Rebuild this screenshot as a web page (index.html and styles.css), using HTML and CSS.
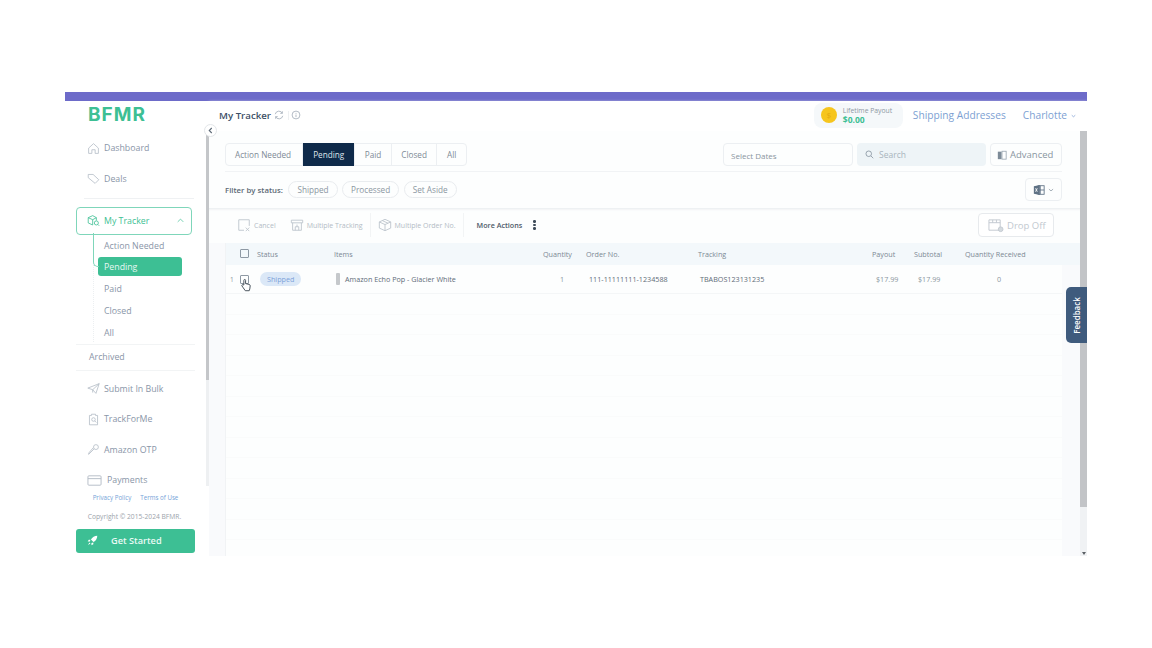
FILE: index.html
```html
<!DOCTYPE html>
<html lang="en">

<head>
    <meta charset="UTF-8">
    <title>BFMR - My Tracker</title>
    <link rel="stylesheet" href="styles.css">
</head>

<body>
    <div class="app">
        <div class="topbar"></div>
        <div class="layout">
            <aside class="sidebar">
                <div class="side-scroll">
                    <div class="logo">BFMR</div>
                    <a class="nav-item first">
                        <svg class="nav-icon" viewBox="0 0 16 16"><path d="M2 7.500 8 2l6 5.500V14H10V9.500H6V14H2z"/></svg>
                        Dashboard
                    </a>
                    <a class="nav-item">
                        <svg class="nav-icon" viewBox="0 0 16 16"><path d="M1.500 3h6l7 6.500-4.500 4.500-8.500-7z"/></svg>
                        Deals
                    </a>
                    <div class="side-line"></div>
                    <div class="tracker-box">
                        <svg class="nav-icon green" viewBox="0 0 16 16"><path d="M1.500 4.500 7 2l4.500 2.500V8M1.500 4.500V11L7 13.500M1.500 4.500 7 7v6.500M7 7l4.500-2.500"/><circle cx="11.500" cy="11" r="2.500"/><path d="m13.500 13 1.500 1.500"/></svg>
                        My Tracker
                        <svg class="chev" viewBox="0 0 10 6"><path d="M1 5l4-4 4 4"/></svg>
                    </div>
                    <div class="sub-list">
                        <a class="sub-item">Action Needed</a>
                        <a class="sub-item active">Pending</a>
                        <a class="sub-item">Paid</a>
                        <a class="sub-item">Closed</a>
                        <a class="sub-item">All</a>
                    </div>
                    <div class="archived">Archived</div>
                    <a class="nav-item">
                        <svg class="nav-icon" viewBox="0 0 16 16"><path d="M1 7.500 15 2l-4 12-4-4.500zM7 9.500 15 2M7 9.500V13"/></svg>
                        Submit In Bulk
                    </a>
                    <a class="nav-item">
                        <svg class="nav-icon" viewBox="0 0 16 16"><path d="M3 3h2.500V1.500h5V3H13v11.500H3z"/><circle cx="8" cy="8" r="2.200"/><path d="m9.500 9.700 2 2"/></svg>
                        TrackForMe
                    </a>
                    <a class="nav-item">
                        <svg class="nav-icon" viewBox="0 0 16 16"><circle cx="11" cy="5" r="3"/><path d="M8.800 7.200 2 14v-1.500l5.500-6.500"/></svg>
                        Amazon OTP
                    </a>
                    <a class="nav-item">
                        <svg class="nav-icon wide" viewBox="0 0 16 12"><rect x="1" y="1" width="14" height="10" rx="1"/><path d="M1 4h14"/></svg>
                        Payments
                    </a>
                    <div class="side-track"><div class="side-thumb"></div></div>
                </div>
                <div class="side-foot">
                    <div class="foot-links"><span>Privacy Policy</span><span>Terms of Use</span></div>
                    <div class="copyright">Copyright © 2015-2024 BFMR.</div>
                    <button class="start-btn">
                        <svg viewBox="0 0 16 16"><path d="M15 1c-4 .2-7.200 2-9.300 5.600l3.700 3.700C13 8.200 14.800 5 15 1z"/><path d="M5 6.800H2.600L1 9.500h3.200zM9.200 11v2.400L6.500 15v-3.200zM3.500 11 1.500 14.500 5 12.500z"/></svg>
                        Get Started
                    </button>
                </div>
            </aside>

            <main class="content">
                <header class="head">
                    <h1>My Tracker</h1>
                    <svg class="head-icon" viewBox="0 0 12 12"><path d="M1.500 5A4.500 4.500 0 0 1 10 4M10.500 7A4.500 4.500 0 0 1 2 8M10 1.500V4H7.500M2 10.500V8h2.500"/></svg>
                    <span class="head-sep"></span>
                    <svg class="head-icon" viewBox="0 0 12 12"><circle cx="6" cy="6" r="4.700"/><path d="M6 5.500v3M6 3.500v1"/></svg>
                    <div class="payout">
                        <span class="coin">$</span>
                        <div class="payout-text">
                            <small>Lifetime Payout</small>
                            <b>$0.00</b>
                        </div>
                    </div>
                    <a class="head-link">Shipping Addresses</a>
                    <a class="head-link user">Charlotte
                        <svg viewBox="0 0 10 6"><path d="M1.500 1.500 5 4.500l3.500-3"/></svg>
                    </a>
                </header>

                <div class="body-wrap">
                    <div class="panel">
                        <div class="tabs-row">
                            <div class="tabs">
                                <span class="tab">Action Needed</span>
                                <span class="tab on">Pending</span>
                                <span class="tab">Paid</span>
                                <span class="tab">Closed</span>
                                <span class="tab">All</span>
                            </div>
                            <div class="dates">Select Dates</div>
                            <div class="search">
                                <svg viewBox="0 0 12 12"><circle cx="5" cy="5" r="3.700"/><path d="m8 8 3 3"/></svg>
                                Search
                            </div>
                            <div class="advanced">
                                <svg viewBox="0 0 12 12"><rect x="1" y="2" width="4.500" height="9" fill="#7d8b98"/><rect x="6" y="1.500" width="5" height="9.500" fill="none" stroke="#9aa6b1"/></svg>
                                Advanced
                            </div>
                        </div>
                        <div class="filter-row">
                            <b>Filter by status:</b>
                            <span class="pill">Shipped</span>
                            <span class="pill">Processed</span>
                            <span class="pill">Set Aside</span>
                            <div class="excel">
                                <svg class="xls" viewBox="0 0 14 14"><rect x="6" y="2" width="7" height="10" fill="none" stroke="#5f7285"/><path d="M8.500 2v10M6 7h7" stroke="#5f7285"/><path d="M1 2.500 8 1.200v11.600l-7-1.300z" fill="#5f7285"/><path d="m3 5 2 4M5 5 3 9" stroke="#fff"/></svg>
                                <svg class="xls-chev" viewBox="0 0 10 6"><path d="M1.500 1.500 5 4.500l3.500-3"/></svg>
                            </div>
                        </div>
                        <div class="actions">
                            <span class="act">
                                <svg class="act-icon" viewBox="0 0 16 16"><path d="M8 14H2V2h12v7M10 11l4 4M14 11l-4 4"/></svg>
                                Cancel
                            </span>
                            <span class="act">
                                <svg class="act-icon" viewBox="0 0 16 16"><path d="M1.500 2.500h13v3h-13zM3 5.500V14h10V5.500M6 14v-4h4v4M8 10V7.500"/></svg>
                                Multiple Tracking
                            </span>
                            <span class="act-sep"></span>
                            <span class="act">
                                <svg class="act-icon" viewBox="0 0 16 16"><path d="M8 1.500 14.500 4.500v7L8 14.500 1.500 11.500v-7zM1.500 4.500 8 7.500l6.500-3M8 7.500v7M5 3l6.500 3"/></svg>
                                Multiple Order No.
                            </span>
                            <span class="act-sep"></span>
                            <span class="more">More Actions</span>
                            <span class="dots"><i></i><i></i><i></i></span>
                            <button class="drop-off">
                                <svg viewBox="0 0 18 16"><path d="M2 2h12v11H2zM2 5h12M6 2v3M10 2v3"/><circle cx="14.500" cy="12" r="2.500" fill="#d5dbe0"/></svg>
                                Drop Off
                            </button>
                        </div>
                        <div class="table">
                            <div class="t-row t-head">
                                <span class="check"></span>
                                <span>Status</span>
                                <span>Items</span>
                                <span>Quantity</span>
                                <span>Order No.</span>
                                <span>Tracking</span>
                                <span>Payout</span>
                                <span>Subtotal</span>
                                <span>Quantity Received</span>
                            </div>
                            <div class="t-row t-data">
                                <span class="row-no">1</span>
                                <span class="check"></span>
                                <span><em class="status">Shipped</em></span>
                                <span class="item"><i class="thumb"></i>Amazon Echo Pop - Glacier White</span>
                                <span class="qty">1</span>
                                <span class="dark">111-11111111-1234588</span>
                                <span class="dark">TBABOS123131235</span>
                                <span class="money">$17.99</span>
                                <span class="money">$17.99</span>
                                <span class="recv">0</span>
                            </div>
                            <div class="empty-rows"></div>
                        </div>
                    </div>
                    <div class="scrollbar">
                        <div class="scroll-thumb"></div>
                        <div class="scroll-arrow"></div>
                    </div>
                </div>
            </main>
        </div>

        <button class="collapse">
            <svg viewBox="0 0 6 8"><path d="M4.500 1 1.500 4l3 3"/></svg>
        </button>
        <div class="feedback"><span>Feedback</span></div>
        <svg class="cursor" viewBox="0 0 14 18"><path d="M4 9V2.500a1.200 1.200 0 0 1 2.400 0V7l5 1.200c1 .3 1.600 1 1.500 2l-.6 4.300-.8 2.500H6l-3.500-5-1.200-1.800c-.6-1 .6-2.200 1.600-1.400z"/></svg>
    </div>
</body>

</html>
```

FILE: styles.css
```css
* {
    box-sizing: border-box;
}

body {
    margin: 0;
    height: 648px;
    overflow: hidden;
    background-color: #fff;
    font-family: "Open Sans", sans-serif;
    color: #7d8b9b;
}

svg {
    fill: none;
    stroke: currentColor;
    stroke-width: 1;
}

.app {
    position: relative;
    width: 1022px;
    height: 464px;
    margin: 92px 0 0 65px;
    overflow: hidden;
    background-color: #fff;
}

.topbar {
    height: 9px;
    background-color: #6d6bc9;
}

.layout {
    display: flex;
    height: 455px;
}

/* sidebar */
.sidebar {
    width: 144px;
    flex-shrink: 0;
    display: flex;
    flex-direction: column;
}

.side-scroll {
    position: relative;
    height: 385px;
    overflow: hidden;
    padding: 0 0 0 11px;
    background-color: #fff;
}

.side-track {
    position: absolute;
    top: 34px;
    right: 0;
    bottom: 0;
    width: 3px;
    background-color: #eef0f2;
}

.side-thumb {
    height: 245px;
    background-color: #c4c6c9;
}

.logo {
    padding: 1px 0 0 12px;
    font-family: "Inter", sans-serif;
    font-size: 19px;
    font-weight: 700;
    line-height: 25px;
    letter-spacing: 1px;
    color: #3dbf94;
}

.nav-item {
    display: flex;
    align-items: center;
    gap: 4px;
    height: 30.500px;
    padding-left: 11px;
    font-size: 8.800px;
    color: #8a96a8;
}

.nav-item.first {
    margin-top: 6px;
}

.nav-icon {
    width: 13px;
    height: 13px;
    flex-shrink: 0;
    color: #b4bcc6;
}

.nav-icon.wide {
    width: 15px;
    margin-right: 1px;
}

.nav-icon.green {
    color: #3dbf94;
}

.side-line {
    height: 1px;
    margin: 4px 15px 7.500px 8px;
    background-color: #eff1f3;
}

.tracker-box {
    display: flex;
    align-items: center;
    gap: 4px;
    width: 116px;
    height: 28px;
    padding: 0 7px 0 10px;
    border: 1px solid #7fd6ba;
    border-radius: 4px;
    font-size: 8.800px;
    color: #3dbf94;
}

.chev {
    width: 7px;
    height: 5px;
    margin-left: auto;
    color: #3dbf94;
}

.sub-list {
    margin-left: 17px;
    padding-top: 1px;
    border-left: 1px dotted #eceff1;
}

.sub-item {
    position: relative;
    display: block;
    height: 19px;
    margin-bottom: 2.800px;
    padding-left: 10px;
    font-size: 8.800px;
    line-height: 20px;
    color: #8a96a8;
}

.sub-item.active {
    width: 84px;
    margin-left: 4px;
    padding-left: 6px;
    border-radius: 3px;
    background-color: #3dbf94;
    line-height: 21px;
    color: #e8f8f3;
}

/* the green line from the tracker box to the open item */
.sub-item.active::before {
    content: "";
    position: absolute;
    top: -24px;
    left: -5px;
    width: 5px;
    height: 33px;
    border-left: 1px solid #7fd6ba;
    border-bottom: 1px solid #7fd6ba;
    border-bottom-left-radius: 5px;
}

.archived {
    height: 27px;
    margin: 1px 14px 2px 0;
    padding-left: 13px;
    border-top: 1px solid #f2f4f5;
    border-bottom: 1px solid #f2f4f5;
    font-size: 8.800px;
    line-height: 24px;
    color: #8a96a8;
}

.side-foot {
    flex: 1;
    padding-top: 7px;
    background-color: #fff;
    text-align: center;
}

.foot-links {
    display: flex;
    justify-content: center;
    gap: 9px;
    padding-right: 3px;
    font-size: 6.200px;
    line-height: 9px;
    color: #75a3d8;
}

.copyright {
    margin-top: 10px;
    padding-right: 5px;
    font-size: 6.700px;
    line-height: 9px;
    color: #9ba3ab;
}

.start-btn {
    display: flex;
    align-items: center;
    width: 119px;
    height: 24px;
    margin: 8px 0 0 11px;
    padding: 0 0 2px 11px;
    border: 0;
    border-radius: 3px;
    background-color: #3dbf94;
    font-family: inherit;
    font-size: 9.200px;
    font-weight: 600;
    color: #eafaf5;
}

.start-btn svg {
    width: 11px;
    height: 11px;
    margin-right: 13px;
    fill: #fff;
    stroke: none;
}

/* header */
.content {
    flex: 1;
    min-width: 0;
    display: flex;
    flex-direction: column;
}

.head {
    display: flex;
    align-items: center;
    height: 30px;
    flex-shrink: 0;
    padding: 0 11px 2px 10px;
    box-shadow: 0 1px 3px #e9edf0;
}

.head h1 {
    margin: 0;
    font-size: 9.700px;
    font-weight: 600;
    color: #3c4f66;
}

.head-icon {
    width: 10px;
    height: 10px;
    margin-left: 3px;
    color: #a5afba;
}

.head-sep {
    width: 1px;
    height: 9px;
    margin-left: 4px;
    background-color: #eef0f2;
}

.head-sep + .head-icon {
    margin-left: 2px;
}

.payout {
    display: flex;
    align-items: center;
    gap: 6px;
    width: 89px;
    height: 25px;
    margin-left: auto;
    padding-left: 7px;
    border-radius: 8px;
    background-color: #f5f8fa;
}

.coin {
    width: 16px;
    height: 16px;
    border-radius: 50%;
    background-color: #f6c51d;
    font-size: 8px;
    line-height: 16px;
    text-align: center;
    color: #e3a90f;
}

.payout-text small {
    display: block;
    font-size: 6.800px;
    line-height: 8px;
    color: #8d97a2;
}

.payout-text b {
    display: block;
    font-size: 8.500px;
    line-height: 9px;
    color: #3dbf94;
}

.head-link {
    margin-left: 10px;
    font-size: 10.200px;
    color: #7d9fd3;
}

.head-link.user {
    display: flex;
    align-items: center;
    gap: 4px;
    margin-left: 17px;
}

.head-link.user svg {
    width: 5px;
    height: 4px;
    margin-top: 2px;
    stroke-width: 1.500;
}

/* main panel */
.body-wrap {
    flex: 1;
    display: flex;
    min-height: 0;
}

.panel {
    flex: 1;
    min-width: 0;
    display: flex;
    flex-direction: column;
    padding-top: 12px;
    background: linear-gradient(#fdfefe 112px, #f9fafc 112px);
}

.tabs-row {
    display: flex;
    align-items: center;
    height: 23px;
    flex-shrink: 0;
    margin: 0 18px 0 16px;
}

.tabs {
    display: flex;
    height: 23px;
    border: 1px solid #eceff2;
    border-radius: 4px;
    font-size: 8.200px;
    font-weight: 500;
    line-height: 21px;
    color: #7e8a96;
}

.tab {
    padding: 0 9.500px;
    border-right: 1px solid #eceff2;
}

.tab:first-child {
    padding: 0 11px 0 9px;
}

.tab:last-child {
    border-right: 0;
}

.tab.on {
    margin: -1px 0;
    padding: 0 10px;
    line-height: 23px;
    background-color: #0f2a4a;
    color: #dfe5ec;
}

.dates {
    width: 130px;
    height: 23px;
    margin-left: auto;
    padding-left: 7px;
    border: 1px solid #eceff2;
    border-radius: 4px;
    font-size: 8px;
    line-height: 23px;
    color: #8a95a0;
}

.search {
    display: flex;
    align-items: center;
    gap: 5px;
    width: 129px;
    height: 23px;
    margin-left: 4px;
    padding-left: 8px;
    border-radius: 4px;
    background-color: #eef4f7;
    font-size: 8.500px;
    color: #a9b4bd;
}

.search svg {
    width: 9px;
    height: 9px;
    color: #7d8b98;
}

.advanced {
    display: flex;
    align-items: center;
    gap: 3px;
    width: 72px;
    height: 23px;
    margin-left: 4px;
    padding-left: 6px;
    border: 1px solid #eceff2;
    border-radius: 4px;
    font-size: 9.500px;
    color: #8a96a1;
}

.advanced svg {
    width: 10px;
    height: 10px;
    stroke: none;
}

.filter-row {
    display: flex;
    align-items: center;
    gap: 4.500px;
    height: 37px;
    flex-shrink: 0;
    margin: 5px 18px 0 16px;
    padding-bottom: 1px;
    border-top: 1px solid #f1f3f5;
    font-size: 8.200px;
}

.filter-row b {
    margin-right: 1px;
    font-size: 7.800px;
    font-weight: 600;
    color: #5b6875;
}

.pill {
    height: 17px;
    padding: 0 8px;
    border: 1px solid #e9ecef;
    border-radius: 9px;
    line-height: 15px;
    font-weight: 500;
    color: #8b96a1;
}

.excel {
    display: flex;
    align-items: center;
    gap: 3px;
    height: 23px;
    margin-left: auto;
    padding: 0 7px;
    border: 1px solid #eceff2;
    border-radius: 4px;
}

.xls {
    width: 12px;
    height: 12px;
    stroke: none;
}

.xls-chev {
    width: 6px;
    height: 4px;
    color: #6b7a88;
}

.actions {
    display: flex;
    align-items: center;
    height: 35px;
    flex-shrink: 0;
    padding: 0 26px 1px 28px;
    box-shadow: inset 0 3px 3px -2px #e6e9ec;
    font-size: 7px;
    color: #b3bcc5;
}

.act {
    display: flex;
    align-items: center;
    gap: 3px;
    font-weight: 500;
}

.act-icon {
    width: 14px;
    height: 14px;
    color: #bcc4cb;
}

.act + .act {
    margin-left: 14px;
}

.act-sep {
    width: 1px;
    height: 24px;
    margin: 0 7px;
    background-color: #f2f4f5;
}

.more {
    margin-left: 6px;
    font-size: 7.200px;
    font-weight: 600;
    color: #4d5a68;
}

.dots {
    display: flex;
    flex-direction: column;
    gap: 1px;
    margin-left: 11px;
}

.dots i {
    width: 2.500px;
    height: 2.500px;
    border-radius: 50%;
    background-color: #3e4b59;
}

.drop-off {
    display: flex;
    align-items: center;
    gap: 3px;
    width: 76px;
    height: 24px;
    margin-left: auto;
    padding: 0 0 0 8px;
    border: 1px solid #e7eaed;
    border-radius: 4px;
    background-color: #fff;
    font-family: inherit;
    font-size: 9.500px;
    font-weight: 500;
    color: #c2c9d0;
}

.drop-off svg {
    width: 17px;
    height: 15px;
    color: #c2c9d0;
}

/* table */
.table {
    flex: 1;
    display: flex;
    flex-direction: column;
    min-height: 0;
    margin-left: 16px;
    border-left: 1px solid #f1f3f5;
    font-size: 7.200px;
}

.t-row {
    display: grid;
    grid-template-columns: 17px 77px 209px 43px 112px 174px 42px 51px 1fr;
    align-items: center;
}

.t-head {
    height: 22px;
    padding: 0 0 1px 14px;
    background-color: #f3f8fb;
    color: #7c8894;
}

.check {
    display: block;
    width: 9px;
    height: 9px;
    border: 1px solid #8e99a4;
    border-radius: 1px;
}

.t-data {
    grid-template-columns: 10px 20px 76px 209px 44px 111px 172px 42px 51px 1fr;
    height: 29px;
    margin-right: 18px;
    padding-left: 4px;
    border-bottom: 1px solid #f4f6f7;
    background-color: #fdfefe;
    color: #8b96a0;
}

.row-no {
    font-size: 6.500px;
}

.status {
    display: inline-block;
    height: 14px;
    padding: 0 7px;
    border-radius: 7px;
    background-color: #dbe8f7;
    font-style: normal;
    line-height: 14px;
    color: #7ba2d9;
}

.item {
    display: flex;
    align-items: center;
    gap: 5px;
    color: #5f6c79;
}

.thumb {
    width: 4px;
    height: 12px;
    border-radius: 1px;
    background-color: #c5c8cb;
}

.qty {
    padding-left: 15px;
}

.dark {
    color: #5f6c79;
}

.money {
    padding-left: 4px;
}

.recv {
    padding-left: 32px;
}

.empty-rows {
    flex: 1;
    margin-right: 18px;
    background-image: repeating-linear-gradient(#fdfefe 0, #fdfefe 19.500px, #fafbfb 19.500px, #fafbfb 20.500px);
}

.scrollbar {
    position: relative;
    width: 7px;
    flex-shrink: 0;
    background-color: #f0f2f4;
}

.scroll-thumb {
    height: 376px;
    background-color: #c2c4c7;
}

.scroll-arrow {
    position: absolute;
    bottom: 1px;
    left: 2px;
    border-top: 3px solid #5a5f64;
    border-left: 2px solid transparent;
    border-right: 2px solid transparent;
}

/* things lying over the page */
.collapse {
    position: absolute;
    top: 32px;
    left: 139px;
    display: flex;
    align-items: center;
    justify-content: center;
    width: 13px;
    height: 13px;
    padding: 0;
    border: 1px solid #e3e6e9;
    border-radius: 50%;
    background-color: #fff;
    color: #5d6976;
}

.collapse svg {
    width: 5px;
    height: 7px;
    stroke-width: 1.300;
}

.feedback {
    position: absolute;
    top: 195px;
    right: 0;
    display: flex;
    align-items: center;
    justify-content: center;
    width: 21px;
    height: 56px;
    border-radius: 5px 0 0 5px;
    background-color: #3f5b7d;
}

.feedback span {
    transform: rotate(-90deg);
    font-size: 8px;
    font-weight: 600;
    color: #fff;
}

.cursor {
    position: absolute;
    top: 186px;
    left: 176px;
    width: 10px;
    height: 14px;
    fill: #fff;
    stroke: #3f4953;
    stroke-width: 1.300;
}
```
